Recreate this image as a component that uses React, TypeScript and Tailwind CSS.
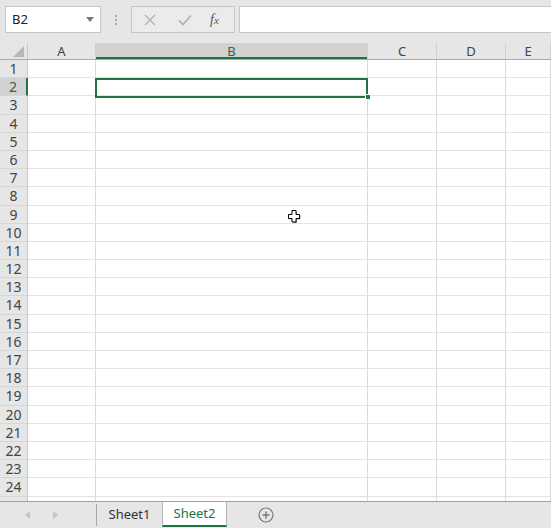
import React from "react";

const columns = [
  { label: "A", width: "w-[68px]" },
  { label: "B", width: "w-[272px]" },
  { label: "C", width: "w-[69px]" },
  { label: "D", width: "w-[69px]" },
  { label: "E", width: "flex-1" },
];

const rows = Array.from({ length: 25 }, (_, i) => i + 1);

function CrossCursor() {
  return (
    <svg width="16" height="16" viewBox="0 0 16 16" className="absolute left-[286px] top-[165px]">
      <path
        d="M6 2.5h4v4h3.5v4H10v3.5H6v-3.5H2.5v-4H6z"
        fill="#9a9a9a"
        transform="translate(1 1)"
      />
      <path d="M6 2.5h4v4h3.5v4H10v3.5H6v-3.5H2.5v-4H6z" fill="#fff" stroke="#000" strokeWidth="1" />
    </svg>
  );
}

export default function App() {
  return (
    <div className="relative flex h-[528px] w-[551px] flex-col overflow-hidden bg-[#e6e6e6] font-['Noto_Sans',sans-serif] text-[13px] text-[#444]">
      {/* formula bar */}
      <div className="flex h-[43px] shrink-0 items-start pl-[5px] pt-[6px]">
        <div className="flex h-[27px] w-[96px] items-center justify-between border border-[#c6c6c6] bg-white pl-[6px] pr-[6px]">
          <span className="text-[13px] text-[#222]">B2</span>
          <svg width="8" height="5" viewBox="0 0 8 5">
            <path d="M0 0h8L4 5z" fill="#777" />
          </svg>
        </div>
        <div className="flex h-[27px] w-[30px] flex-col items-center justify-center gap-[2px]">
          <span className="h-[2px] w-[2px] bg-[#aaa]" />
          <span className="h-[2px] w-[2px] bg-[#aaa]" />
          <span className="h-[2px] w-[2px] bg-[#aaa]" />
        </div>
        <div className="flex h-[27px] w-[104px] items-center border border-[#c6c6c6] bg-[#ebebeb]">
          <svg width="12" height="12" viewBox="0 0 12 12" className="ml-[12px]">
            <path d="M1 1l10 10M11 1L1 11" stroke="#b0b0b0" strokeWidth="1.3" />
          </svg>
          <svg width="14" height="12" viewBox="0 0 14 12" className="ml-[22px]">
            <path d="M1 6.5l4 4L13 1.5" stroke="#b0b0b0" strokeWidth="1.6" fill="none" />
          </svg>
          <span className="ml-[18px] font-['Liberation_Serif',serif] text-[14px] italic text-[#555]">
            f<span className="text-[11px]">x</span>
          </span>
        </div>
        <div className="ml-[4px] h-[27px] flex-1 border border-[#c6c6c6] border-r-0 bg-white" />
      </div>

      {/* grid */}
      <div className="relative h-[458px] shrink-0 overflow-hidden bg-white">
        <div className="flex h-[17px] border-b border-[#ababab] bg-[#e6e6e6]">
          <div className="relative w-[28px] shrink-0 border-r border-[#c8c8c8]">
            <svg width="11" height="11" viewBox="0 0 11 11" className="absolute bottom-[2px] right-[3px]">
              <path d="M11 0v11H0z" fill="#b8b8b8" />
            </svg>
          </div>
          {columns.map((c) => (
            <div
              key={c.label}
              className={`${c.width} shrink-0 border-r border-[#d0d0d0] text-center text-[13px] leading-[16px] ${
                c.label === "B" ? "bg-[#d2d2d2] text-[#2d6a4a] shadow-[inset_0_-2px_0_#217346]" : ""
              }`}
            >
              {c.label}
            </div>
          ))}
        </div>
        {rows.map((r) => (
          <div key={r} className="flex h-[18.2px]">
            <div
              className={`w-[28px] shrink-0 border-b border-[#d6d6d6] text-center text-[14px] leading-[17px] ${
                r === 2
                  ? "border-r-2 border-r-[#217346] bg-[#d2d2d2] text-[#3a5e4a]"
                  : "border-r border-r-[#c8c8c8] bg-[#e6e6e6]"
              }`}
            >
              {r < 25 ? r : ""}
            </div>
            {columns.map((c) => (
              <div key={c.label} className={`${c.width} shrink-0 border-b border-r border-b-[#e2e2e2] border-r-[#dadada]`} />
            ))}
          </div>
        ))}

        {/* selection */}
        <div className="absolute left-[95px] top-[34.5px] h-[20px] w-[273px] border-2 border-[#217346]" />
        <div className="absolute left-[364.5px] top-[50.5px] h-[6px] w-[6px] border border-white bg-[#217346]" />
        <CrossCursor />
      </div>

      {/* sheet tabs */}
      <div className="flex h-[27px] shrink-0 items-stretch border-t border-[#a0a0a0] bg-[#e6e6e6]">
        <div className="flex w-[96px] items-center pl-[25px]">
          <svg width="6" height="8" viewBox="0 0 6 8">
            <path d="M5 0v8L0 4z" fill="#c4c4c4" />
          </svg>
          <svg width="6" height="8" viewBox="0 0 6 8" className="ml-[21px]">
            <path d="M1 0v8l5-4z" fill="#c4c4c4" />
          </svg>
        </div>
        <div className="my-[2px] w-px bg-[#a8a8a8]" />
        <div className="flex w-[65px] items-center justify-center text-[13px] text-[#333]">Sheet1</div>
        <div className="mb-[1px] flex w-[65px] items-center justify-center border-x border-[#b4b4b4] border-b-2 border-b-[#217346] bg-white text-[13px] text-[#217346]">
          Sheet2
        </div>
        <div className="flex w-[78px] items-center justify-center">
          <svg width="16" height="16" viewBox="0 0 16 16">
            <circle cx="8" cy="8" r="7" fill="none" stroke="#777" strokeWidth="1.2" />
            <path d="M8 4.5v7M4.5 8h7" stroke="#777" strokeWidth="1.4" />
          </svg>
        </div>
      </div>
    </div>
  );
}
